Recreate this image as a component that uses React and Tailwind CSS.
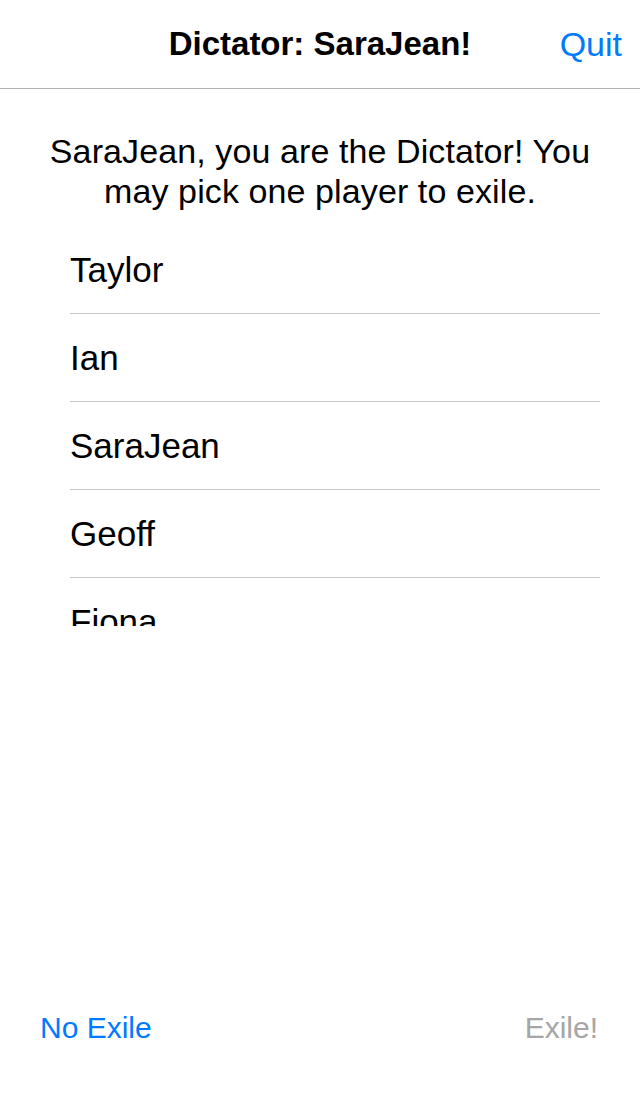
import React from "react";

const players = ["Taylor", "Ian", "SaraJean", "Geoff", "Fiona", "Marcus"];

export default function App() {
  return (
    <div className="flex h-[1096px] w-[640px] flex-col bg-white font-['Liberation_Sans',Arial,sans-serif] text-black">
      {/* nav bar */}
      <div className="relative flex h-[89px] shrink-0 items-center justify-center border-b border-[#b2b2b2]">
        <div className="text-[33px] font-bold">Dictator: SaraJean!</div>
        <button className="absolute right-[18px] top-[24px] text-[34px] leading-[40px] text-[#007aff]">
          Quit
        </button>
      </div>

      <p className="mx-auto mt-[42px] w-[580px] text-center text-[34px] leading-[40px] tracking-[0.1px]">
        SaraJean, you are the Dictator! You may pick one player to exile.
      </p>

      {/* player list */}
      <div className="mt-[15px] h-[400px] overflow-hidden pl-[70px] pr-[40px]">
        {players.map((name) => (
          <div
            key={name}
            className="flex h-[88px] items-center border-b border-[#c8c7cc] pt-[2px] text-[35px]"
          >
            {name}
          </div>
        ))}
      </div>

      <div className="flex-1" />

      <div className="flex h-[108px] items-start justify-between px-[40px] pt-[22px] text-[30px] leading-[36px]">
        <button className="text-[#007aff]">No Exile</button>
        <button className="pr-[2px] text-[#a6a6a6]">Exile!</button>
      </div>
    </div>
  );
}
